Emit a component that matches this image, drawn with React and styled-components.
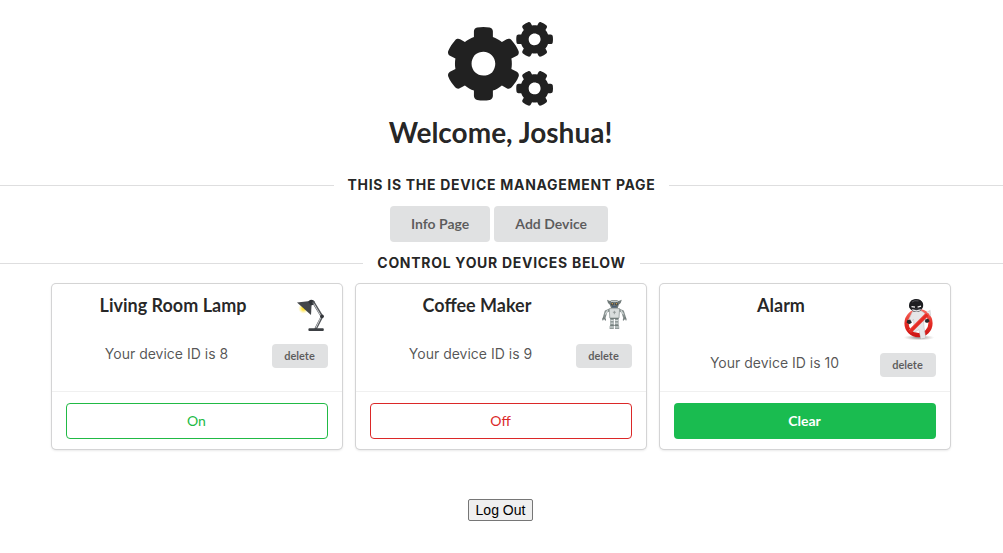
import React from "react";
import styled, { createGlobalStyle } from "styled-components";
import { FaCogs } from "react-icons/fa";

const GlobalStyle = createGlobalStyle`
  *, *::before, *::after { box-sizing: border-box; }
  body {
    margin: 0;
    background: #fff;
    color: rgba(0, 0, 0, 0.87);
    font-family: Inter, "Liberation Sans", sans-serif;
    font-size: 14px;
    line-height: 20px;
  }
`;

const lato = `Lato, "Liberation Sans", sans-serif`;

const Page = styled.main`
  display: flex;
  flex-direction: column;
  padding: 22px 0 32px;
`;

const PageHeader = styled.h1`
  display: flex;
  flex-direction: column;
  align-items: center;
  gap: 8px;
  margin: 0 0 26px;
  padding-right: 2px;
  font: 700 28px/36px ${lato};
`;

const GearsIcon = styled(FaCogs)`
  width: 105px;
  height: 84px;
`;

const Divider = styled.h2`
  display: flex;
  align-items: center;
  gap: 14px;
  margin: 0;
  font-size: 14px;
  font-weight: 700;
  line-height: 18px;
  letter-spacing: 0.05em;
  text-transform: uppercase;

  &::before,
  &::after {
    content: "";
    flex: 1;
    border-top: 1px solid #dededf;
  }
`;

const Button = styled.button`
  border: 0;
  border-radius: 4px;
  min-width: 56px;
  padding: ${(p) => (p.$small ? "0 12px 2px" : "0 21px 2px")};
  height: ${(p) => (p.$small ? "24px" : "36px")};
  background: #e0e1e2;
  color: rgba(0, 0, 0, 0.6);
  font: 700 ${(p) => (p.$small ? "11px" : "14px")} ${lato};
  cursor: pointer;
`;

const Toolbar = styled.nav`
  display: flex;
  justify-content: center;
  gap: 4px;
  padding: 12px 5px 12px 0;
`;

const Cards = styled.section`
  display: flex;
  flex-wrap: wrap;
  justify-content: center;
  gap: 14px;
  padding: 12px 2px 0 0;
`;

const Card = styled.article`
  display: flex;
  flex-direction: column;
  width: 290px;
  border-radius: 4px;
  box-shadow: 0 1px 3px 0 #d4d4d5, 0 0 0 1px #d4d4d5;
`;

const CardContent = styled.div`
  flex: 1;
  padding: 14px;
`;

const CardTop = styled.div`
  display: flex;
  align-items: flex-start;
  gap: 12px;
  margin-bottom: 11px;
`;

const CardTitle = styled.h3`
  flex: 1;
  margin: -4px 0 0;
  color: rgba(0, 0, 0, 0.85);
  font: 700 18px/23px ${lato};
  text-align: center;
`;

const CardMeta = styled.div`
  display: flex;
  align-items: flex-start;
  gap: 4px;
`;

const Description = styled.p`
  flex: 1;
  margin: 0;
  color: rgba(0, 0, 0, 0.68);
  text-align: center;
`;

const CardExtra = styled.div`
  padding: 11px 14px 10px;
  border-top: 1px solid rgba(0, 0, 0, 0.06);
`;

const tones = {
  on: "color: #21ba45; border: 1px solid #21ba45; background: #fff;",
  off: "color: #db2828; border: 1px solid #db2828; background: #fff;",
  clear: "color: #fff; border: 0; background: #1abc50; font-weight: 700;",
};

const StateButton = styled.button`
  display: block;
  width: 100%;
  height: 36px;
  padding: 0 0 2px;
  border-radius: 4px;
  font: 400 14px ${lato};
  cursor: pointer;
  ${(p) => tones[p.$tone]}
`;

const Footer = styled.footer`
  display: flex;
  justify-content: center;
  padding: 50px 2px 0 0;
`;

const LogOutButton = styled.button`
  padding: 1px 7px;
  border: 1px solid #767676;
  border-radius: 2px;
  background: #efefef;
  color: #000;
  font: 14px/18px "Liberation Sans", Arial, sans-serif;
`;

const LampPicture = () => (
  <svg width="35" height="35" viewBox="0 0 35 35" aria-hidden="true">
    <defs>
      <radialGradient id="glow">
        <stop offset="0.3" stopColor="#ffe13a" />
        <stop offset="1" stopColor="#fff6b8" stopOpacity="0.2" />
      </radialGradient>
    </defs>
    <circle cx="10.5" cy="10.5" r="5" fill="url(#glow)" />
    <path d="M4 4.5 15 3.2Q18.5 4 18.5 8L18 17Z" fill="#43464a" />
    <path d="M15 3.5 17 2Q20 1 22 4L21 6.5 18 7.5Z" fill="#303338" />
    <g fill="none" strokeLinecap="round" strokeLinejoin="round">
      <path d="M20.5 4.5 29 18.5 22.8 30.5" stroke="#55585c" strokeWidth="2.6" />
      <path d="M21 6 28.3 18.5 23 29.5" stroke="#d5d7d9" strokeWidth="0.9" />
    </g>
    <circle cx="29" cy="18.3" r="1.9" fill="#33363a" />
    <rect x="15.4" y="30.2" width="15.4" height="2.8" rx="1" fill="#3c3f43" />
  </svg>
);

const RobotPicture = () => (
  <svg width="35" height="35" viewBox="0 0 35 35" aria-hidden="true">
    <g fill="none" strokeLinecap="round" strokeLinejoin="round">
      <path d="M12 12.2 9 13.5 7 20.3M22.6 12.2 25.6 13.5 27.8 20.3" stroke="#87908f" strokeWidth="2.8" />
      <path d="M10.4 12.8 8.4 16M24.2 12.8 26.2 16" stroke="#cfd6d5" strokeWidth="1.3" />
      <path d="M5.8 22V20.4L7 19.6 8.4 21V22.2M26.4 22.2V21L27.8 19.6 29 20.4V22" stroke="#6d7675" strokeWidth="1" />
    </g>
    <path d="M10 1.8 13 3.1 14.5 2.3H20L21.7 3.1 24.8 1.8 23.7 5 21.8 6.8 20.8 10H14L12.8 6.8 11 5Z" fill="#707a79" />
    <path d="M14 3.5H20.8" stroke="#c4cccb" strokeWidth="1" />
    <circle cx="15.3" cy="6" r="1.6" fill="#39434b" />
    <circle cx="19.5" cy="6" r="1.6" fill="#39434b" />
    <circle cx="15.3" cy="5.8" r="0.8" fill="#d4a34e" />
    <circle cx="19.5" cy="5.8" r="0.8" fill="#d4a34e" />
    <path d="M15 8.7H19.7" stroke="#465d78" strokeWidth="1.2" />
    <path d="M12.2 10.6H22.6L22 20H12.8Z" fill="#d9dedd" stroke="#8f9998" strokeWidth="0.8" />
    <path d="M17.4 12.8V16.2M15.9 14.3H18.9" stroke="#8a9392" strokeWidth="0.8" />
    <path d="M13.2 20.3H16.8V31H12.6V28.6L13.2 27ZM18 20.3H21.6V27L22.2 28.6V31H18Z" fill="#929c9b" />
    <path d="M13.6 22.5H16.6M18.2 22.5H21.2M13.6 25.2H16.6M18.2 25.2H21.2M13 29H16.6M18.2 29H21.8" stroke="#d7dddc" strokeWidth="1" />
    <path d="M13.2 20.5H21.6M13.4 27.3H21.4" stroke="#65706f" strokeWidth="0.8" />
  </svg>
);

const BurglarPicture = () => (
  <svg width="35" height="44" viewBox="0 0 35 44" aria-hidden="true">
    <defs>
      <radialGradient id="floor">
        <stop offset="0.2" stopColor="#847d7a" stopOpacity="0.75" />
        <stop offset="1" stopColor="#b8b3b0" stopOpacity="0" />
      </radialGradient>
      <linearGradient id="ring" x1="0" y1="0" x2="0" y2="1">
        <stop offset="0" stopColor="#f5655c" />
        <stop offset="0.5" stopColor="#e52c25" />
        <stop offset="1" stopColor="#cf1715" />
      </linearGradient>
    </defs>
    <ellipse cx="18" cy="39.6" rx="15.5" ry="2.9" fill="url(#floor)" />
    <circle cx="17.5" cy="25.2" r="12" fill="none" stroke="url(#ring)" strokeWidth="4.2" />
    <path d="M11.5 13.5 20 12.8 23.4 15 27 23 24.5 24.5 22.5 21.5 23 29 24.5 39.5 20 40.5 17.8 31.5 14 34 11.4 33 13 27 12.5 21 9 26 6.8 23.6Z" fill="#e6e6e8" stroke="#c2c2c5" strokeWidth="0.6" />
    <path d="M6.2 22.3 9.2 21.5 10.8 24.7 8 26.2 5.6 24.6Z" fill="#27282b" />
    <path d="M24.2 21.6 27.2 20.8 28.7 23.2 26.1 25 24.1 24Z" fill="#27282b" />
    <path d="M26 14.5 28.8 12.8 29.5 18" stroke="#d8d8da" strokeWidth="1.4" fill="none" />
    <circle cx="15.4" cy="7.6" r="6.4" fill="#303136" />
    <path d="M8.2 9.5C7.3 4.5 10.3 1 15 1S23 4.3 22.1 8.5L21 10.7 15.3 9.8 10.2 12Z" fill="#1d1e21" />
    <path d="M10.8 12Q15.5 15.5 20 12L19.5 11.3 15.4 12.2 11.5 11.3Z" fill="#e4e4e6" />
    <path d="M10.5 8.6 14 9.2M16.6 9.2 20 8.2" stroke="#f3f3f3" strokeWidth="1.3" />
    <path d="M11 4Q13.5 1.9 17.5 3" fill="none" stroke="#515257" strokeWidth="1" />
    <path d="M8.6 33.8 26.1 16.4" stroke="#e52c25" strokeWidth="4" />
    <path d="M8 32.2 25 15.2" stroke="#f47a70" strokeWidth="0.7" />
    <path d="M18.7 32.5 22.7 32 24.1 39.5 20 40.5Z" fill="#e6e6e8" />
  </svg>
);

const devices = [
  { id: 8, name: "Living Room Lamp", Picture: LampPicture, action: "On", tone: "on" },
  { id: 9, name: "Coffee Maker", Picture: RobotPicture, action: "Off", tone: "off" },
  { id: 10, name: "Alarm", Picture: BurglarPicture, action: "Clear", tone: "clear" },
];

const DeviceCard = ({ id, name, Picture, action, tone }) => (
  <Card>
    <CardContent>
      <CardTop>
        <CardTitle>{name}</CardTitle>
        <Picture />
      </CardTop>
      <CardMeta>
        <Description>Your device ID is {id}</Description>
        <Button type="button" $small>delete</Button>
      </CardMeta>
    </CardContent>
    <CardExtra>
      <StateButton type="button" $tone={tone}>{action}</StateButton>
    </CardExtra>
  </Card>
);

export default function App() {
  return (
    <>
      <GlobalStyle />
      <Page>
        <PageHeader>
          <GearsIcon aria-hidden="true" />
          Welcome, Joshua!
        </PageHeader>
        <Divider>This is the device management page</Divider>
        <Toolbar>
          <Button type="button">Info Page</Button>
          <Button type="button">Add Device</Button>
        </Toolbar>
        <Divider>Control your devices below</Divider>
        <Cards>
          {devices.map((device) => (
            <DeviceCard key={device.id} {...device} />
          ))}
        </Cards>
        <Footer>
          <LogOutButton type="button">Log Out</LogOutButton>
        </Footer>
      </Page>
    </>
  );
}
